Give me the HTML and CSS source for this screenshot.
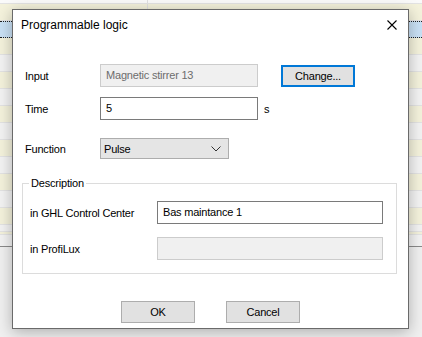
FILE: index.html
```html
<!DOCTYPE html>
<html lang="en">
<head>
    <meta charset="UTF-8">
    <title>Programmable logic</title>
    <link rel="stylesheet" href="styles.css">
</head>
<body>
<div class="app">
    <div class="grid">
        <div class="row head"><div class="cell first"></div><div class="cell"></div></div>
        <div class="row cream"><div class="cell first"></div><div class="cell"></div></div>
        <div class="row selected"><div class="cell first"></div><div class="cell"></div></div>
        <div class="row cream"><div class="cell first"></div><div class="cell"></div></div>
        <div class="row plain"><div class="cell first"></div><div class="cell"></div></div>
        <div class="row cream"><div class="cell first"></div><div class="cell"></div></div>
        <div class="row plain"><div class="cell first"></div><div class="cell"></div></div>
        <div class="row cream"><div class="cell first"></div><div class="cell"></div></div>
        <div class="row plain"><div class="cell first"></div><div class="cell"></div></div>
        <div class="row cream"><div class="cell first"></div><div class="cell"></div></div>
        <div class="row plain"><div class="cell first"></div><div class="cell"></div></div>
        <div class="row cream"><div class="cell first"></div><div class="cell"></div></div>
        <div class="row plain"><div class="cell first"></div><div class="cell"></div></div>
        <div class="row cream"><div class="cell first"></div><div class="cell"></div></div>
        <div class="row plain short"><div class="cell first"></div><div class="cell"></div></div>
        <div class="row cream thin"><div class="cell first"></div><div class="cell"></div></div>
        <div class="row plain last"><div class="cell first"></div><div class="cell"></div></div>
    </div>
</div>

<div class="dialog">
    <div class="titlebar">
        <span class="title">Programmable logic</span>
        <svg class="close" width="10" height="10" viewBox="0 0 10 10">
            <path d="M0.5 0.5 L9.5 9.5 M9.5 0.5 L0.5 9.5" stroke="#000" stroke-width="1.1" fill="none"/>
        </svg>
    </div>
    <div class="body">
        <div class="field field-input">
            <span class="label">Input</span>
            <div class="textbox disabled">Magnetic stirrer 13</div>
            <div class="btn focused change">Change...</div>
        </div>
        <div class="field field-time">
            <span class="label">Time</span>
            <div class="textbox">5</div>
            <span class="unit">s</span>
        </div>
        <div class="field field-function">
            <span class="label">Function</span>
            <div class="combo">
                <span>Pulse</span>
                <svg width="10" height="6" viewBox="0 0 10 6">
                    <path d="M0.5 0.5 L5 5 L9.5 0.5" stroke="#333" stroke-width="1" fill="none"/>
                </svg>
            </div>
        </div>

        <div class="group">
            <span class="legend">Description</span>
            <div class="field group-row first-row">
                <span class="label wide">in GHL Control Center</span>
                <div class="textbox long">Bas maintance 1</div>
            </div>
            <div class="field group-row">
                <span class="label wide">in ProfiLux</span>
                <div class="textbox long disabled"></div>
            </div>
        </div>

        <div class="buttons">
            <div class="btn">OK</div>
            <div class="btn">Cancel</div>
        </div>
    </div>
</div>
</body>
</html>
```

FILE: styles.css
```css
body {
    margin: 0;
    width: 422px;
    height: 337px;
    overflow: hidden;
    background-color: #f0f0f0;
    font-family: 'Liberation Sans', Arial, sans-serif;
    font-size: 12px;
    color: #000;
    position: relative;
}

/* the list behind the dialog */
.grid {
    display: flex;
    flex-direction: column;
}
.row {
    display: flex;
    height: 16px;
    border-bottom: 1px solid #e3e3e3;
}
.row.head {
    height: 3px;
    background-color: #fafafa;
}
.row.cream {
    background-color: #f4f2dc;
}
.row.plain {
    background-color: #f3f3f3;
}
.row.selected {
    background-color: #c9e1f5;
    border-top: 1px dotted #222;
    border-bottom: 1px dotted #222;
    height: 15px;
}
.row.short {
    height: 6px;
}
.row.thin {
    height: 2px;
}
.row.last {
    height: 11px;
    border-bottom: 1px solid #8a8a8a;
}
.cell.first {
    width: 147px;
    border-right: 1px solid #e0e0e0;
}

/* dialog window */
.dialog {
    position: absolute;
    left: 12px;
    top: 9px;
    width: 397px;
    height: 320px;
    box-sizing: border-box;
    background-color: #fff;
    border: 1px solid #6a6a6a;
    box-shadow: 0 3px 14px rgba(0, 0, 0, 0.28);
    display: flex;
    flex-direction: column;
}
.titlebar {
    height: 30px;
    display: flex;
    align-items: center;
    justify-content: space-between;
    padding: 0 11px 0 8px;
}
.title {
    font-size: 12px;
    color: #000;
}
.close {
    display: block;
}

.body {
    padding: 24px 0 0 12px;
    display: flex;
    flex-direction: column;
    font-size: 11px;
    letter-spacing: -0.2px;
}
.field {
    display: flex;
    align-items: center;
}
.label {
    width: 75px;
    flex-shrink: 0;
}
.label.wide {
    width: 127px;
}
.textbox {
    width: 158px;
    height: 23px;
    box-sizing: border-box;
    border: 1px solid #7a7a7a;
    background-color: #fff;
    padding-left: 5px;
    line-height: 20px;
}
.textbox.disabled {
    background-color: #f0f0f0;
    border-color: #cccccc;
    color: #6d6d6d;
}
.textbox.long {
    width: 226px;
}
.btn {
    width: 74px;
    height: 22px;
    box-sizing: border-box;
    border: 1px solid #adadad;
    background-color: #e1e1e1;
    text-align: center;
    line-height: 20px;
}
.btn.focused {
    border: 2px solid #0078d7;
    line-height: 18px;
}
.change {
    margin-left: 23px;
}
.field-time {
    margin-top: 10px;
}
.unit {
    margin-left: 6px;
}
.field-function {
    margin-top: 18px;
}
.combo {
    width: 129px;
    height: 21px;
    box-sizing: border-box;
    border: 1px solid #adadad;
    background-color: #e5e5e5;
    display: flex;
    align-items: center;
    justify-content: space-between;
    padding: 0 7px 0 3px;
}
.combo svg {
    display: block;
}

/* description group box */
.group {
    position: relative;
    margin: 24px 11px 0 -3px;
    height: 91px;
    box-sizing: border-box;
    border: 1px solid #dcdcdc;
    padding: 17px 0 0 7px;
}
.legend {
    position: absolute;
    left: 6px;
    top: -9px;
    padding: 0 2px;
    background-color: #fff;
    line-height: 16px;
}
.group-row + .group-row {
    margin-top: 13px;
}

.buttons {
    display: flex;
    justify-content: center;
    gap: 31px;
    margin: 27px 0 0 -12px;
}
```
